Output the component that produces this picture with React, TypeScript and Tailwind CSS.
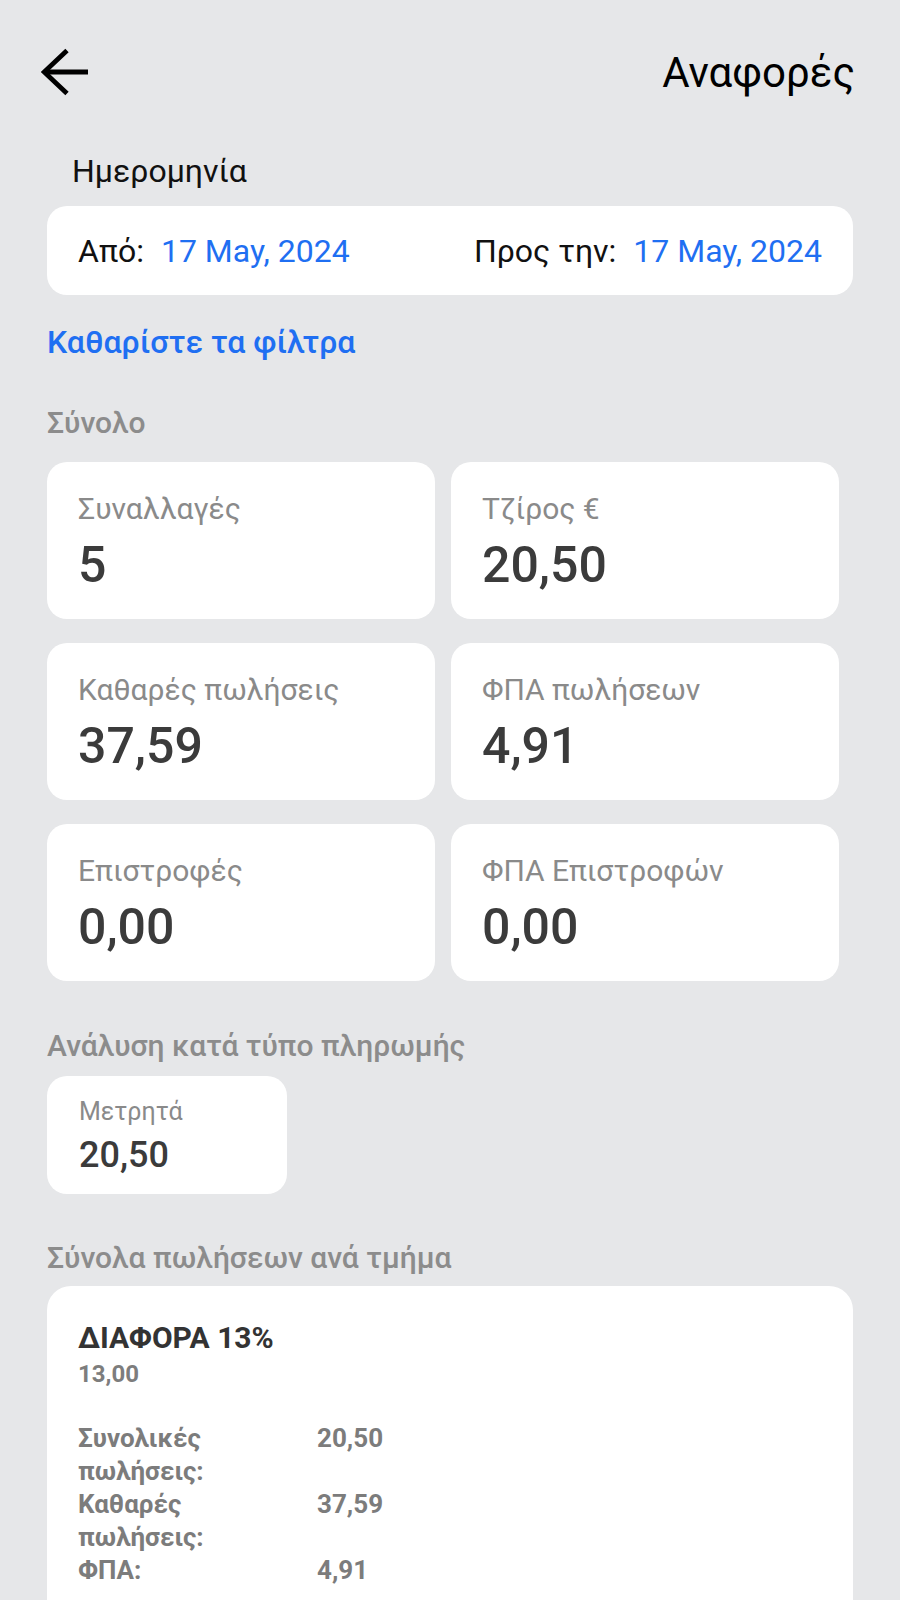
import React from "react";

const stats = [
  { label: "Συναλλαγές", value: "5" },
  { label: "Τζίρος €", value: "20,50" },
  { label: "Καθαρές πωλήσεις", value: "37,59" },
  { label: "ΦΠΑ πωλήσεων", value: "4,91" },
  { label: "Επιστροφές", value: "0,00" },
  { label: "ΦΠΑ Επιστροφών", value: "0,00" },
];

const deptRows = [
  { label: "Συνολικές πωλήσεις:", value: "20,50" },
  { label: "Καθαρές πωλήσεις:", value: "37,59" },
  { label: "ΦΠΑ:", value: "4,91" },
];

function BackArrow() {
  return (
    <svg width="48" height="48" viewBox="0 0 48 48" fill="none" className="block">
      <path d="M3 24H47" stroke="#000" strokeWidth="4.8" />
      <path d="M26 2.5L3.2 24L26 45.5" stroke="#000" strokeWidth="4.8" strokeLinejoin="miter" />
    </svg>
  );
}

function StatCard({ label, value }: { label: string; value: string }) {
  return (
    <div className="bg-white rounded-[20px] pt-[30px] pb-[25px] px-[31px]">
      <div className="text-[30px] leading-[34px] text-[#8a8a8a]">{label}</div>
      <div className="mt-[10px] text-[50px] leading-[58px] font-medium text-[#3b3b3b]">{value}</div>
    </div>
  );
}

export default function App() {
  return (
    <div className="min-h-[1600px] bg-[#e6e7e9] font-['Roboto','Noto_Sans',sans-serif] pb-[80px]">
      {/* header */}
      <div className="flex items-start justify-between pt-[48px] pl-[41px] pr-[45px]">
        <BackArrow />
        <h1 className="text-[42px] leading-[50px] text-black font-normal">Αναφορές</h1>
      </div>

      <div className="px-[47px]">
        {/* date filter */}
        <div className="mt-[54px] pl-[25px] text-[32px] leading-[38px] text-[#111]">Ημερομηνία</div>
        <div className="mt-[16px] bg-white rounded-[20px] pt-[25px] pb-[24px] px-[31px] flex justify-between text-[32px] leading-[40px]">
          <div className="flex gap-[17px]">
            <span className="text-[#111]">Από:</span>
            <span className="text-[#1f6ff2]">17 May, 2024</span>
          </div>
          <div className="flex gap-[17px]">
            <span className="text-[#111]">Προς την:</span>
            <span className="text-[#1f6ff2]">17 May, 2024</span>
          </div>
        </div>

        <button className="mt-[27px] block text-[32px] leading-[40px] font-medium text-[#1f6ff2]">
          Καθαρίστε τα φίλτρα
        </button>

        {/* totals */}
        <h2 className="mt-[43px] text-[30px] leading-[36px] font-medium text-[#8c8c8c]">Σύνολο</h2>
        <div className="mt-[21px] grid grid-cols-2 gap-x-[16px] gap-y-[24px] w-[792px]">
          {stats.map((s) => (
            <StatCard key={s.label} label={s.label} value={s.value} />
          ))}
        </div>

        {/* payment types */}
        <h2 className="mt-[47px] text-[30px] leading-[36px] font-medium text-[#8c8c8c]">
          Ανάλυση κατά τύπο πληρωμής
        </h2>
        <div className="mt-[12px] w-[240px] bg-white rounded-[20px] pt-[21px] pb-[18px] px-[32px]">
          <div className="text-[25px] leading-[30px] text-[#8a8a8a]">Μετρητά</div>
          <div className="mt-[7px] text-[36px] leading-[42px] font-medium text-[#3b3b3b]">20,50</div>
        </div>

        {/* departments */}
        <h2 className="mt-[46px] text-[30px] leading-[36px] font-medium text-[#8c8c8c]">
          Σύνολα πωλήσεων ανά τμήμα
        </h2>
        <div className="mt-[10px] bg-white rounded-[24px] pt-[34px] pb-[60px] px-[31px]">
          <div className="text-[30px] leading-[36px] font-bold text-[#333]">ΔΙΑΦΟΡΑ 13%</div>
          <div className="mt-[3px] text-[24px] leading-[30px] font-bold text-[#7d7d7d]">13,00</div>
          <div className="mt-[33px] grid grid-cols-[220px_1fr] gap-x-[19px] text-[26px] leading-[33px] font-bold text-[#7c7c7c]">
            {deptRows.map((r) => (
              <React.Fragment key={r.label}>
                <div>{r.label}</div>
                <div>{r.value}</div>
              </React.Fragment>
            ))}
          </div>
        </div>
      </div>
    </div>
  );
}
